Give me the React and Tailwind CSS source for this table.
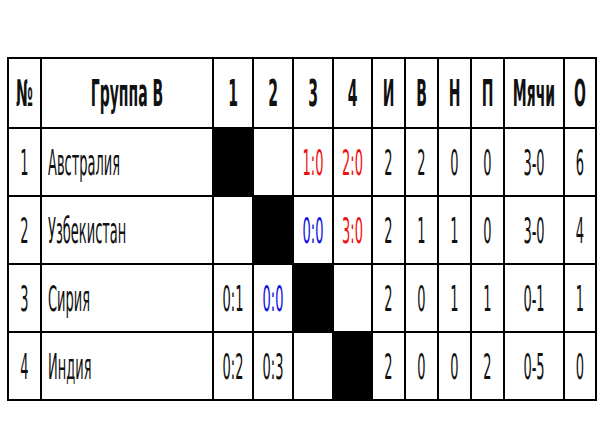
import React from "react";

const cols = [33, 172, 40, 40, 40, 39, 33, 33, 33, 33, 60, 32];
const head = ["№", "Группа В", "1", "2", "3", "4", "И", "В", "Н", "П", "Мячи", "О"];

const rows = [
  { n: "1", name: "Австралия", res: [null, "", { t: "1:0", c: "red" }, { t: "2:0", c: "red" }], stats: ["2", "2", "0", "0", "3-0", "6"] },
  { n: "2", name: "Узбекистан", res: ["", null, { t: "0:0", c: "blue" }, { t: "3:0", c: "red" }], stats: ["2", "1", "1", "0", "3-0", "4"] },
  { n: "3", name: "Сирия", res: [{ t: "0:1" }, { t: "0:0", c: "blue" }, null, ""], stats: ["2", "0", "1", "1", "0-1", "1"] },
  { n: "4", name: "Индия", res: [{ t: "0:2" }, { t: "0:3" }, "", null], stats: ["2", "0", "0", "2", "0-5", "0"] },
];

const colorClass = {
  red: "text-[#f01010]",
  blue: "text-[#1010e0]",
};

function Txt({ children, bold, className = "" }) {
  return (
    <span
      className={`inline-block whitespace-nowrap leading-none ${bold ? "font-bold text-[14px] scale-y-[2.6]" : "text-[13px] scale-y-[2.7]"} ${className}`}
    >
      {children}
    </span>
  );
}

export default function App() {
  return (
    <div className="w-[600px] h-[440px] bg-white pt-[57px] pl-[7px]" style={{ fontFamily: '"DejaVu Sans", sans-serif' }}>
      <table className="table-fixed border-collapse text-[#111]">
        <colgroup>
          {cols.map((w, i) => (
            <col key={i} style={{ width: w }} />
          ))}
        </colgroup>
        <thead>
          <tr className="h-[70px]">
            {head.map((h, i) => (
              <th key={i} className="border-2 border-black text-center p-0">
                <Txt bold>{h}</Txt>
              </th>
            ))}
          </tr>
        </thead>
        <tbody>
          {rows.map((r) => (
            <tr key={r.n} className="h-[68px]">
              <td className="border-2 border-black text-center p-0">
                <Txt>{r.n}</Txt>
              </td>
              <td className="border-2 border-black text-left pl-[6px] p-0">
                <Txt className="origin-left">{r.name}</Txt>
              </td>
              {r.res.map((c, i) =>
                c === null ? (
                  <td key={i} className="border-2 border-black bg-black p-0" />
                ) : (
                  <td key={i} className="border-2 border-black text-center p-0">
                    {c && <Txt className={c.c ? colorClass[c.c] : ""}>{c.t}</Txt>}
                  </td>
                )
              )}
              {r.stats.map((s, i) => (
                <td key={i} className="border-2 border-black text-center p-0">
                  <Txt>{s}</Txt>
                </td>
              ))}
            </tr>
          ))}
        </tbody>
      </table>
    </div>
  );
}
